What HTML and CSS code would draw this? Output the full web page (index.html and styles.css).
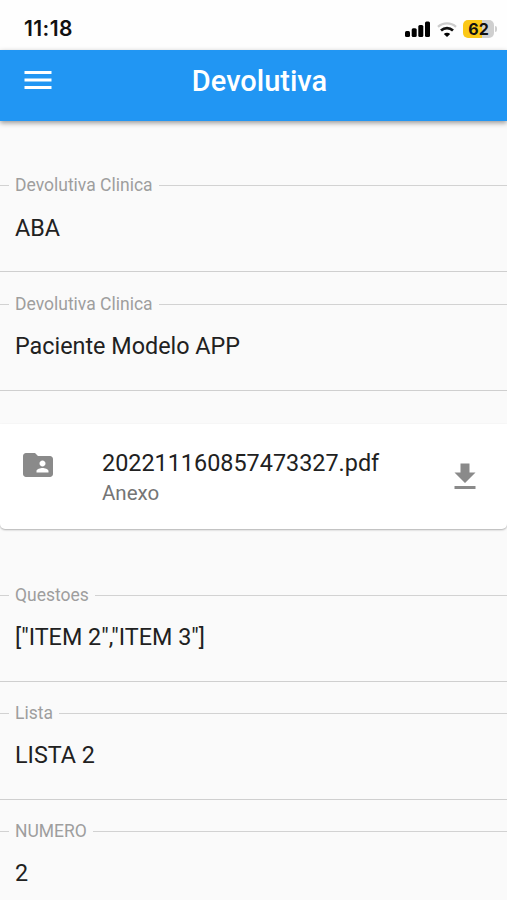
FILE: index.html
```html
<!DOCTYPE html>
<html lang="pt-BR">
<head>
<meta charset="utf-8">
<title>Devolutiva</title>
<link rel="stylesheet" href="styles.css">
</head>
<body>
<div class="status">
  <span class="time">11:18</span>
  <div class="indicators">
    <svg class="signal" width="25" height="16" viewBox="0 0 25 16"><rect x="0" y="10" width="5" height="6" rx="1.5"/><rect x="6.7" y="7.3" width="5" height="8.7" rx="1.5"/><rect x="13.3" y="4" width="5" height="12" rx="1.5"/><rect x="20" y="0.5" width="5" height="15.5" rx="1.5"/></svg>
    <svg class="wifi" width="20" height="15" viewBox="0 0 20 15"><path d="M1 4.800C6 .2 14 .2 19 4.800" fill="none" stroke="#cccccc" stroke-width="2.300"/><path d="M4 8.600c3.500-3.200 8.500-3.200 12 0" fill="none" stroke="#111" stroke-width="2.700"/><path d="M6.800 12c1.900-1.700 4.500-1.700 6.400 0L10 15z"/></svg>
    <div class="battery">62</div>
    <span class="cap"></span>
  </div>
</div>
<header class="bar">
  <svg class="menu" width="36" height="36" viewBox="0 0 24 24"><path fill="#fff" d="M3 18h18v-2H3v2zm0-5h18v-2H3v2zm0-7v2h18V6H3z"/></svg>
  <h1>Devolutiva</h1>
</header>
<main>
  <section class="group upper">
    <div class="field"><div class="label">Devolutiva Clinica</div><div class="value">ABA</div></div>
    <div class="field"><div class="label">Devolutiva Clinica</div><div class="value">Paciente Modelo APP</div></div>
  </section>
  <article class="card">
    <svg class="folder" width="36" height="36" viewBox="0 0 24 24"><path fill="#8a8a8a" d="M20 6h-8l-2-2H4c-1.100 0-1.990.9-1.990 2L2 18c0 1.100.9 2 2 2h16c1.100 0 2-.9 2-2V8c0-1.100-.9-2-2-2zm-5 3c1.100 0 2 .9 2 2s-.9 2-2 2-2-.9-2-2 .9-2 2-2zm4 8h-8v-1c0-1.330 2.670-2 4-2s4 .670 4 2v1z"/></svg>
    <div class="file"><div class="name">202211160857473327.pdf</div><div class="kind">Anexo</div></div>
    <svg class="download" width="36" height="36" viewBox="0 0 24 24"><path fill="#8a8a8a" d="M19 9h-4V3H9v6H5l7 7 7-7zM5 18v2h14v-2H5z"/></svg>
  </article>
  <section class="group">
    <div class="field"><div class="label">Questoes</div><div class="value">["ITEM 2","ITEM 3"]</div></div>
    <div class="field"><div class="label">Lista</div><div class="value">LISTA 2</div></div>
    <div class="field"><div class="label">NUMERO</div><div class="value">2</div></div>
  </section>
</main>
</body>
</html>
```

FILE: styles.css
```css
* { box-sizing: border-box; }
body {
  margin: 0;
  height: 900px;
  overflow: hidden;
  background: #fafafa;
  color: #212121;
  font-family: Roboto, "Liberation Sans", sans-serif;
}
svg { display: block; flex: none; }
.status {
  display: flex;
  justify-content: space-between;
  height: 50px;
  padding: 0 10px 0 24px;
  background: #fefefe;
  color: #111;
  font-family: Inter, "Liberation Sans", sans-serif;
}
.time { padding-top: 16px; font-size: 21px; line-height: 26px; font-weight: 600; letter-spacing: .4px; }
.indicators { display: flex; align-items: center; height: 58px; }
.signal { margin-right: 7px; }
.wifi { margin-right: 6px; }
.battery {
  width: 31px;
  height: 18px;
  border-radius: 5px;
  background: linear-gradient(90deg, #fbc817 0 62%, #cfcfcf 62%);
  font-size: 16px;
  line-height: 18px;
  font-weight: 700;
  text-align: center;
}
.cap { width: 2px; height: 6px; margin-left: 1px; border-radius: 0 2px 2px 0; background: #cfcfcf; }
.bar {
  display: grid;
  grid-template-columns: 60px 1fr 48px;
  height: 71px;
  background: #2196f3;
  box-shadow: 0 2px 5px rgba(0, 0, 0, .4);
}
.menu { margin: 12px 0 0 20px; }
h1 { margin: 0; padding-top: 13px; font-size: 29px; line-height: 36px; font-weight: 500; color: #fff; text-align: center; }
main { padding-top: 54px; }
.group { display: flex; flex-direction: column; gap: 21px; }
.upper { gap: 22px; }
.field { height: 97px; border-bottom: 1px solid #cfcfcf; }
.label { display: flex; align-items: center; gap: 6px; height: 21px; font-size: 17.5px; line-height: 21px; color: #9e9e9e; }
.label::before, .label::after { content: ""; height: 1px; background: #d2d2d2; }
.label::before { width: 9px; }
.label::after { flex: 1; }
.value { padding: 17px 15px 0; font-size: 23.35px; line-height: 28px; }
.upper .field:first-child .value { padding-top: 18px; }
.card {
  display: flex;
  height: 105px;
  margin: 33px 0 56px;
  padding: 0 24px 0 20px;
  border-radius: 0 0 5px 5px;
  background: #fff;
  box-shadow: 0 1px 2px rgba(0, 0, 0, .3);
}
.folder { margin-top: 23px; }
.file { flex: 1; padding: 24px 0 0 46px; }
.name { font-size: 23.4px; line-height: 30px; }
.kind { font-size: 20.5px; line-height: 30px; color: #757575; }
.download { margin-top: 35px; }
```
